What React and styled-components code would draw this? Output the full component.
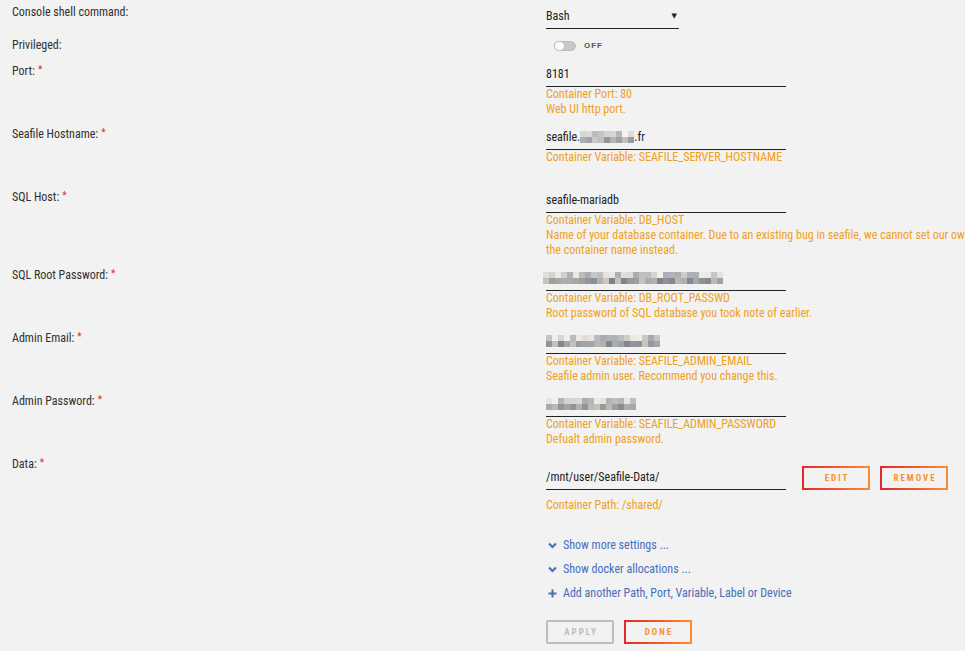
import React from "react";
import styled, { createGlobalStyle } from "styled-components";

const GlobalStyle = createGlobalStyle`
  html, body { margin: 0; padding: 0; background: #f2f2f2; }
  body { font-family: "Roboto Condensed", "Liberation Sans", Arial, sans-serif; color: #303030; }
  * { box-sizing: border-box; }
`;

const Page = styled.div`
  padding: 4px 0 0 12px;
  width: 965px;
  height: 651px;
  overflow: hidden;
`;

const Row = styled.div`
  display: grid;
  grid-template-columns: 534px 1fr;
  margin-bottom: ${(p) => p.$gap ?? 8}px;
`;

const Label = styled.div`
  font-size: 12px;
  line-height: 16px;
  color: #303030;
`;

const Req = styled.span`
  color: #e22828;
  font-size: 10px;
  margin-left: 3px;
  vertical-align: 2px;
`;

const Field = styled.div`
  display: flex;
  flex-direction: column;
  align-items: flex-start;
  padding-top: ${(p) => p.$offset || 0}px;
`;

const Input = styled.div`
  width: 240px;
  height: 25px;
  padding: 4px 0 4px;
  font-size: 12px;
  line-height: 16px;
  color: #222;
  border-bottom: 1px solid #222;
  display: flex;
  align-items: center;
  white-space: nowrap;
`;

const Select = styled(Input)`
  width: 133px;
  justify-content: space-between;
  padding-right: 2px;
`;

const Caret = styled.span`
  font-family: "DejaVu Sans", sans-serif;
  font-size: 7px;
  color: #222;
`;

const Help = styled.div`
  font-size: 12px;
  line-height: 15px;
  min-height: 15px;
  color: #f0a020;
  white-space: nowrap;
  margin-top: ${(p) => p.$mt || 0}px;
`;

const ToggleWrap = styled.div`
  display: flex;
  align-items: center;
  gap: 8px;
  height: 17px;
  padding-left: 8px;
`;

const Track = styled.span`
  position: relative;
  width: 22px;
  height: 10px;
  border-radius: 5px;
  background: #c8c8c8;
  border: 1px solid #bdbdbd;
`;

const Knob = styled.span`
  position: absolute;
  left: -1px;
  top: -1px;
  width: 11px;
  height: 10px;
  border-radius: 5px;
  background: #fff;
  border: 1px solid #bbb;
`;

const ToggleText = styled.span`
  font-family: "Liberation Sans", Arial, sans-serif;
  font-size: 8px;
  font-weight: bold;
  letter-spacing: 1px;
  color: #555;
`;

const Mosaic = styled.span`
  display: inline-flex;
  flex-wrap: wrap;
  width: ${(p) => p.$w}px;
  height: 12px;
  overflow: hidden;
  filter: blur(0.6px);
  margin-left: ${(p) => p.$ml || 0}px;
`;

const Cell = styled.span`
  width: 6px;
  height: 6px;
`;

const InlineRow = styled.div`
  display: flex;
  align-items: center;
  gap: 16px;
`;

const ButtonGroup = styled.div`
  display: flex;
  gap: 10px;
`;

const Btn = styled.button`
  width: 68px;
  height: 24px;
  padding: 0;
  background: transparent;
  border: 2px solid #e22828;
  border-image: ${(p) =>
    p.$disabled ? "none" : "linear-gradient(90deg, #e22828, #ff8c2f) 1"};
  border-color: ${(p) => (p.$disabled ? "#bdbdbd" : "#e22828")};
  border-radius: 2px;
  font-family: "Roboto Condensed", "Liberation Sans", Arial, sans-serif;
  font-size: 9px;
  font-weight: bold;
  letter-spacing: 2px;
  cursor: pointer;
  display: flex;
  align-items: center;
  justify-content: center;
`;

const BtnText = styled.span`
  color: ${(p) => (p.$disabled ? "#bdbdbd" : "#f5922f")};
  padding-left: 2px;
`;

const Links = styled.div`
  display: flex;
  flex-direction: column;
  gap: 8px;
  padding-left: 2px;
`;

const LinkLine = styled.a`
  display: flex;
  align-items: center;
  gap: 6px;
  font-size: 12px;
  line-height: 16px;
  color: #486dba;
  text-decoration: none;
  height: 16px;
`;

const IconBox = styled.span`
  width: 9px;
  display: inline-flex;
  justify-content: center;
`;

const Actions = styled.div`
  display: flex;
  gap: 10px;
  margin-top: 19px;
`;

function Pixelated({ width, seed, light, ml }) {
  const n = Math.floor(width / 6) * 2;
  const cells = [];
  let s = seed;
  for (let i = 0; i < n; i++) {
    s = (s * 9301 + 49297) % 233280;
    const r = s / 233280;
    const top = i < n / 2;
    const base = top ? (light ? 215 : 205) : light ? 180 : 165;
    const v = Math.round(base + (r - 0.5) * 70);
    const tint = Math.round((r - 0.5) * 14);
    cells.push(`rgb(${v + tint},${v},${v - tint})`);
  }
  return (
    <Mosaic $w={width} $ml={ml}>
      {cells.map((c, i) => (
        <Cell key={i} style={{ background: c }} />
      ))}
    </Mosaic>
  );
}

const Chevron = () => (
  <svg width="9" height="7" viewBox="0 0 9 7">
    <path d="M1 1.5 L4.5 5 L8 1.5" fill="none" stroke="#486dba" strokeWidth="2.2" />
  </svg>
);

const Plus = () => (
  <svg width="9" height="9" viewBox="0 0 9 9">
    <path d="M4.5 0.5 V8.5 M0.5 4.5 H8.5" stroke="#486dba" strokeWidth="2" />
  </svg>
);

function Required({ children }) {
  return (
    <>
      {children}
      <Req>*</Req>
    </>
  );
}

export default function App() {
  return (
    <>
      <GlobalStyle />
      <Page>
        <Row>
          <Label>Console shell command:</Label>
          <Field>
            <Select>
              <span>Bash</span>
              <Caret>▼</Caret>
            </Select>
          </Field>
        </Row>
        <Row>
          <Label>Privileged:</Label>
          <Field>
            <ToggleWrap>
              <Track>
                <Knob />
              </Track>
              <ToggleText>OFF</ToggleText>
            </ToggleWrap>
          </Field>
        </Row>
        <Row>
          <Label>
            <Required>Port:</Required>
          </Label>
          <Field>
            <Input>8181</Input>
            <Help>Container Port: 80</Help>
            <Help>Web UI http port.</Help>
          </Field>
        </Row>
        <Row>
          <Label>
            <Required>Seafile Hostname:</Required>
          </Label>
          <Field>
            <Input>
              seafile.
              <Pixelated width={54} seed={7} light />
              .fr
            </Input>
            <Help>Container Variable: SEAFILE_SERVER_HOSTNAME</Help>
            <Help />
          </Field>
        </Row>
        <Row>
          <Label>
            <Required>SQL Host:</Required>
          </Label>
          <Field>
            <Input>seafile-mariadb</Input>
            <Help>Container Variable: DB_HOST</Help>
            <Help>
              Name of your database container. Due to an existing bug in seafile, we cannot set our own
            </Help>
            <Help>the container name instead.</Help>
          </Field>
        </Row>
        <Row>
          <Label>
            <Required>SQL Root Password:</Required>
          </Label>
          <Field>
            <Input>
              <Pixelated width={180} seed={13} ml={-3} />
            </Input>
            <Help>Container Variable: DB_ROOT_PASSWD</Help>
            <Help>Root password of SQL database you took note of earlier.</Help>
          </Field>
        </Row>
        <Row>
          <Label>
            <Required>Admin Email:</Required>
          </Label>
          <Field>
            <Input>
              <Pixelated width={114} seed={29} />
            </Input>
            <Help>Container Variable: SEAFILE_ADMIN_EMAIL</Help>
            <Help>Seafile admin user. Recommend you change this.</Help>
          </Field>
        </Row>
        <Row>
          <Label>
            <Required>Admin Password:</Required>
          </Label>
          <Field>
            <Input>
              <Pixelated width={90} seed={41} />
            </Input>
            <Help>Container Variable: SEAFILE_ADMIN_PASSWORD</Help>
            <Help>Defualt admin password.</Help>
          </Field>
        </Row>
        <Row $gap={24}>
          <Label>
            <Required>Data:</Required>
          </Label>
          <Field $offset={10}>
            <InlineRow>
              <Input>/mnt/user/Seafile-Data/</Input>
              <ButtonGroup>
                <Btn>
                  <BtnText>EDIT</BtnText>
                </Btn>
                <Btn>
                  <BtnText>REMOVE</BtnText>
                </Btn>
              </ButtonGroup>
            </InlineRow>
            <Help $mt={8}>Container Path: /shared/</Help>
          </Field>
        </Row>
        <Row>
          <div />
          <Field>
            <Links>
              <LinkLine href="#">
                <IconBox>
                  <Chevron />
                </IconBox>
                Show more settings ...
              </LinkLine>
              <LinkLine href="#">
                <IconBox>
                  <Chevron />
                </IconBox>
                Show docker allocations ...
              </LinkLine>
              <LinkLine href="#">
                <IconBox>
                  <Plus />
                </IconBox>
                Add another Path, Port, Variable, Label or Device
              </LinkLine>
            </Links>
            <Actions>
              <Btn $disabled>
                <BtnText $disabled>APPLY</BtnText>
              </Btn>
              <Btn>
                <BtnText>DONE</BtnText>
              </Btn>
            </Actions>
          </Field>
        </Row>
      </Page>
    </>
  );
}
